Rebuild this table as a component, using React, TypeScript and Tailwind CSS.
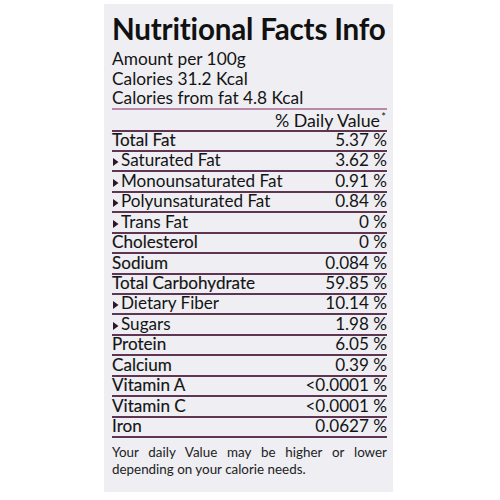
const rows: { name: string; value: string; sub?: boolean }[] = [
  { name: 'Total Fat', value: '5.37 %' },
  { name: 'Saturated Fat', value: '3.62 %', sub: true },
  { name: 'Monounsaturated Fat', value: '0.91 %', sub: true },
  { name: 'Polyunsaturated Fat', value: '0.84 %', sub: true },
  { name: 'Trans Fat', value: '0 %', sub: true },
  { name: 'Cholesterol', value: '0 %' },
  { name: 'Sodium', value: '0.084 %' },
  { name: 'Total Carbohydrate', value: '59.85 %' },
  { name: 'Dietary Fiber', value: '10.14 %', sub: true },
  { name: 'Sugars', value: '1.98 %', sub: true },
  { name: 'Protein', value: '6.05 %' },
  { name: 'Calcium', value: '0.39 %' },
  { name: 'Vitamin A', value: '<0.0001 %' },
  { name: 'Vitamin C', value: '<0.0001 %' },
  { name: 'Iron', value: '0.0627 %' },
];

export default function App() {
  return (
    <div className="w-[500px] h-[500px] bg-white pl-[104px] pt-[4px] font-['Lato',sans-serif] text-[#141414]">
      <div className="w-[289px] h-[488px] bg-[#eeeef3] pl-[8px] pr-[6px] pt-[7px]">
        <h1 className="text-[29.6px] font-bold leading-[36px] tracking-[-0.2px] text-[#111]">Nutritional Facts Info</h1>
        <div className="mt-[2px] text-[17.3px] leading-[19.5px]">
          <p>Amount per 100g</p>
          <p>Calories 31.2 Kcal</p>
          <p>Calories from fat 4.8 Kcal</p>
        </div>
        <div className="border-t-2 border-[#b88aa9]" />
        <div className="flex justify-end h-[20px] text-[17.8px] leading-[20px] pr-[1px]">
          <span className="relative pr-[6px]">
            % Daily Value
            <span className="absolute right-0 top-[-3px] text-[11px]">*</span>
          </span>
        </div>
        <div className="border-t-2 border-[#5e3553]" />
        {rows.map((r) => (
          <div
            key={r.name}
            className="flex items-end justify-between h-[20.45px] border-b-2 border-[#5e3553] text-[17.1px] leading-[20px]"
          >
            <span
              className={`flex items-center ${r.sub ? '' : '[-webkit-text-stroke:0.15px_#141414]'}`}
            >
              {r.sub && (
                <svg width="8" height="10" viewBox="0 0 8 10" className="mr-[1px] mt-[4px]">
                  <path d="M1 1 L6.5 5 L1 9 Z" fill="#2e1628" />
                </svg>
              )}
              {r.name}
            </span>
            <span>{r.value}</span>
          </div>
        ))}
        <p className="mt-[6px] text-[13.4px] leading-[17px] text-justify [text-align-last:left] text-[#222]">
          Your daily Value may be higher or lower depending on your calorie needs.
        </p>
      </div>
    </div>
  );
}
